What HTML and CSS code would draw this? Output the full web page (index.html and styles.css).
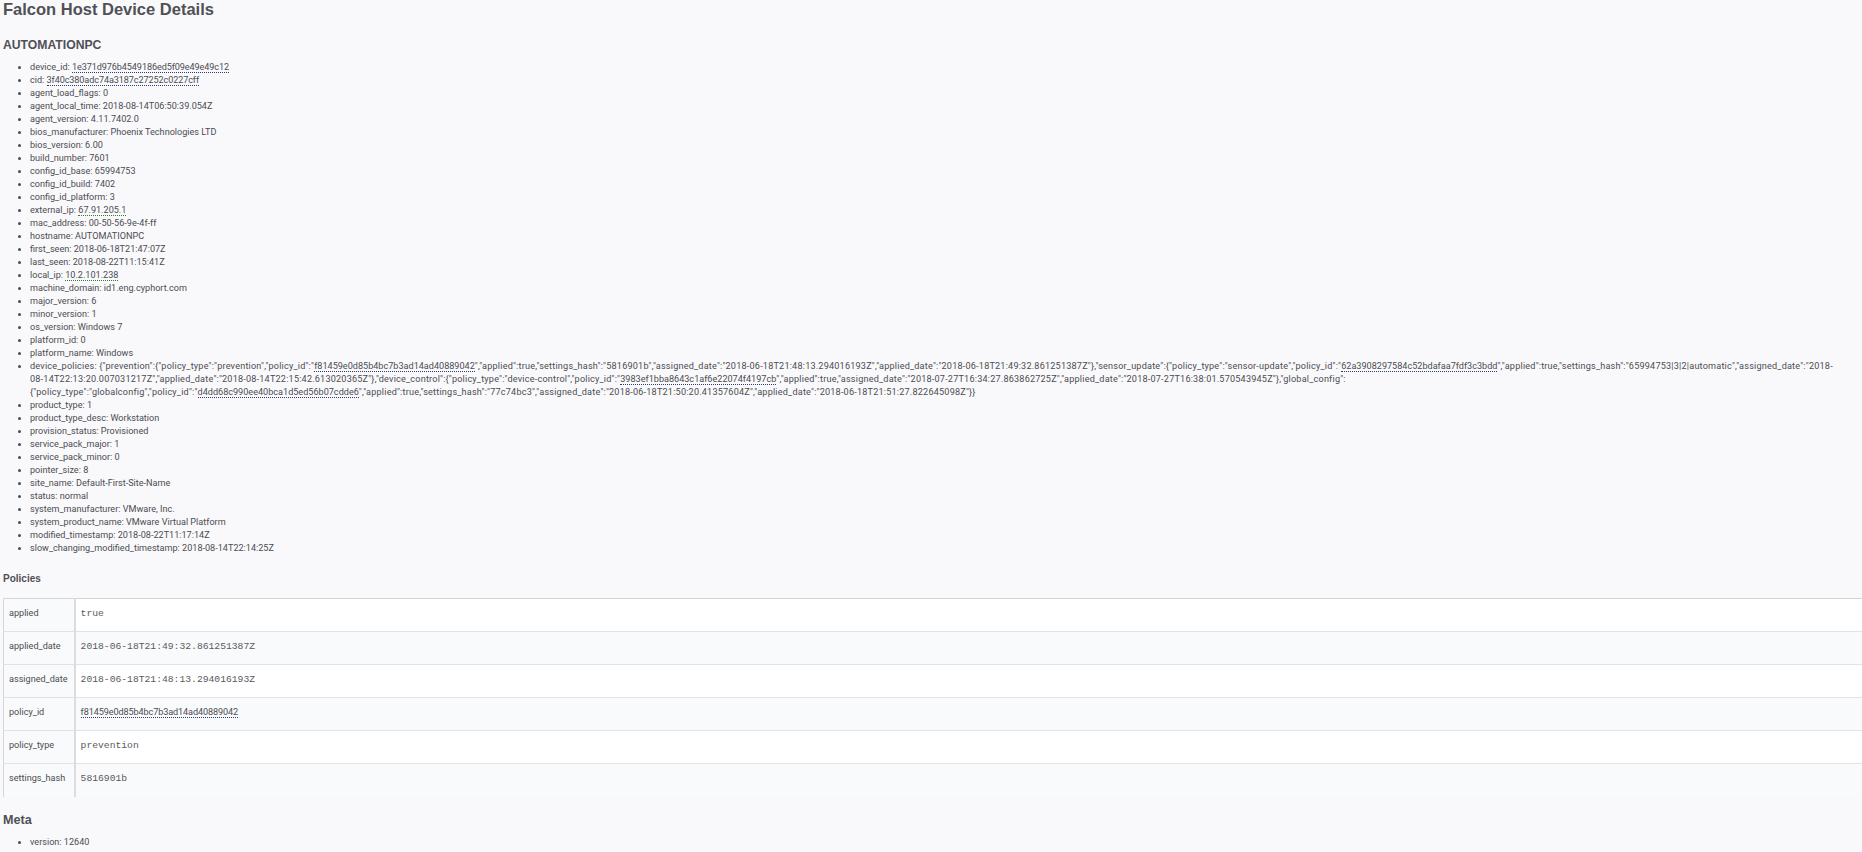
FILE: index.html
```html
<!DOCTYPE html>
<html lang="en">
<head>
<meta charset="utf-8">
<title>Falcon Host Device Details</title>
<link rel="stylesheet" href="styles.css">
</head>
<body>
<h1 class="title">Falcon Host Device Details</h1>
<h2 class="section">AUTOMATIONPC</h2>
<ul class="props">
<li>device_id: <a class="ioc">1e371d976b4549186ed5f09e49e49c12</a></li>
<li>cid: <a class="ioc">3f40c380adc74a3187c27252c0227cff</a></li>
<li>agent_load_flags: 0</li>
<li>agent_local_time: 2018-08-14T06:50:39.054Z</li>
<li>agent_version: 4.11.7402.0</li>
<li>bios_manufacturer: Phoenix Technologies LTD</li>
<li>bios_version: 6.00</li>
<li>build_number: 7601</li>
<li>config_id_base: 65994753</li>
<li>config_id_build: 7402</li>
<li>config_id_platform: 3</li>
<li>external_ip: <a class="ioc ioc-ip">67.91.205.1</a></li>
<li>mac_address: 00-50-56-9e-4f-ff</li>
<li>hostname: AUTOMATIONPC</li>
<li>first_seen: 2018-06-18T21:47:07Z</li>
<li>last_seen: 2018-08-22T11:15:41Z</li>
<li>local_ip: <a class="ioc ioc-ip">10.2.101.238</a></li>
<li>machine_domain: id1.eng.cyphort.com</li>
<li>major_version: 6</li>
<li>minor_version: 1</li>
<li>os_version: Windows 7</li>
<li>platform_id: 0</li>
<li>platform_name: Windows</li>
<li class="json">device_policies: {"prevention":{"policy_type":"prevention","policy_id":"<a class="ioc">f81459e0d85b4bc7b3ad14ad40889042</a>","applied":true,"settings_hash":"5816901b","assigned_date":"2018-06-18T21:48:13.294016193Z","applied_date":"2018-06-18T21:49:32.861251387Z"},"sensor_update":{"policy_type":"sensor-update","policy_id":"<a class="ioc">62a3908297584c52bdafaa7fdf3c3bdd</a>","applied":true,"settings_hash":"65994753|3|2|automatic","assigned_date":"2018-08-14T22:13:20.007031217Z","applied_date":"2018-08-14T22:15:42.613020365Z"},"device_control":{"policy_type":"device-control","policy_id":"<a class="ioc">3983ef1bba8643c1af6e22074f4197cb</a>","applied":true,"assigned_date":"2018-07-27T16:34:27.863862725Z","applied_date":"2018-07-27T16:38:01.570543945Z"},"global_config":{"policy_type":"globalconfig","policy_id":"<a class="ioc">d4dd68c990ee40bca1d5ed56b07cdde6</a>","applied":true,"settings_hash":"77c74bc3","assigned_date":"2018-06-18T21:50:20.41357604Z","applied_date":"2018-06-18T21:51:27.822645098Z"}}</li>
<li>product_type: 1</li>
<li>product_type_desc: Workstation</li>
<li>provision_status: Provisioned</li>
<li>service_pack_major: 1</li>
<li>service_pack_minor: 0</li>
<li>pointer_size: 8</li>
<li>site_name: Default-First-Site-Name</li>
<li>status: normal</li>
<li>system_manufacturer: VMware, Inc.</li>
<li>system_product_name: VMware Virtual Platform</li>
<li>modified_timestamp: 2018-08-22T11:17:14Z</li>
<li>slow_changing_modified_timestamp: 2018-08-14T22:14:25Z</li>
</ul>
<h3 class="subsection">Policies</h3>
<table class="kv">
<tbody>
<tr><th>applied</th><td><code>true</code></td></tr>
<tr><th>applied_date</th><td><code>2018-06-18T21:49:32.861251387Z</code></td></tr>
<tr><th>assigned_date</th><td><code>2018-06-18T21:48:13.294016193Z</code></td></tr>
<tr><th>policy_id</th><td><a class="ioc">f81459e0d85b4bc7b3ad14ad40889042</a></td></tr>
<tr><th>policy_type</th><td><code>prevention</code></td></tr>
<tr><th>settings_hash</th><td><code>5816901b</code></td></tr>
</tbody>
</table>
<h2 class="section section-meta">Meta</h2>
<ul class="props">
<li>version: 12640</li>
</ul>
</body>
</html>
```
FILE: styles.css
```css
html, body {
  margin: 0;
  height: 100%;
  overflow: hidden;
}
body {
  background: #f9f9fc;
  color: #4c4c50;
  font-family: Roboto, "Open Sans", sans-serif;
  font-size: 9.1px;
  line-height: 13px;
  padding: 0 0 0 3px;
}
.title, .section, .subsection {
  font-family: "Liberation Sans", Arial, sans-serif;
  font-weight: 700;
  color: #505055;
  margin: 0;
}
.title {
  font-size: 16.5px;
  line-height: 19px;
}
.section {
  font-size: 12.2px;
  line-height: 16px;
  margin-top: 18px;
}
.section-meta {
  font-size: 12.6px;
  margin-top: 15px;
}
.subsection {
  font-size: 10px;
  line-height: 12px;
  margin-top: 18px;
}
.props {
  margin: 8px 0 0;
  padding: 0 20px 0 27px;
  list-style: disc;
}
.props li {
  line-height: 13px;
}
.props .json {
  letter-spacing: 0.2px;
}
.ioc {
  color: #4c4c50;
  letter-spacing: -0.1px;
  border-bottom: 1px dotted #2b3a78;
}
.json .ioc {
  letter-spacing: 0;
}
.ioc-ip {
  letter-spacing: 0;
  border-bottom-color: #2e7d32;
}
.kv {
  width: 100%;
  margin-top: 13px;
  border-collapse: collapse;
  border-top: 1px solid #d5d5d8;
  border-left: 1px solid #d5d5d8;
}
.kv th, .kv td {
  height: 33px;
  box-sizing: border-box;
  padding: 0 6px 3px 5px;
  text-align: left;
  font-weight: 400;
  border-top: 1px solid #e2e2e6;
}
.kv tr:first-child th, .kv tr:first-child td {
  border-top: 0;
}
.kv th {
  width: 70px;
  padding-left: 5px;
  padding-right: 6px;
  white-space: nowrap;
  background: #f9fafc;
  border-right: 2px solid #dcdce0;
}
.kv td {
  background: #fff;
}
.kv tr:nth-child(even) td {
  background: #f9fafc;
}
code {
  font-family: "Liberation Mono", "Courier New", monospace;
  font-size: 9.7px;
  color: #5a5a5e;
}
```
